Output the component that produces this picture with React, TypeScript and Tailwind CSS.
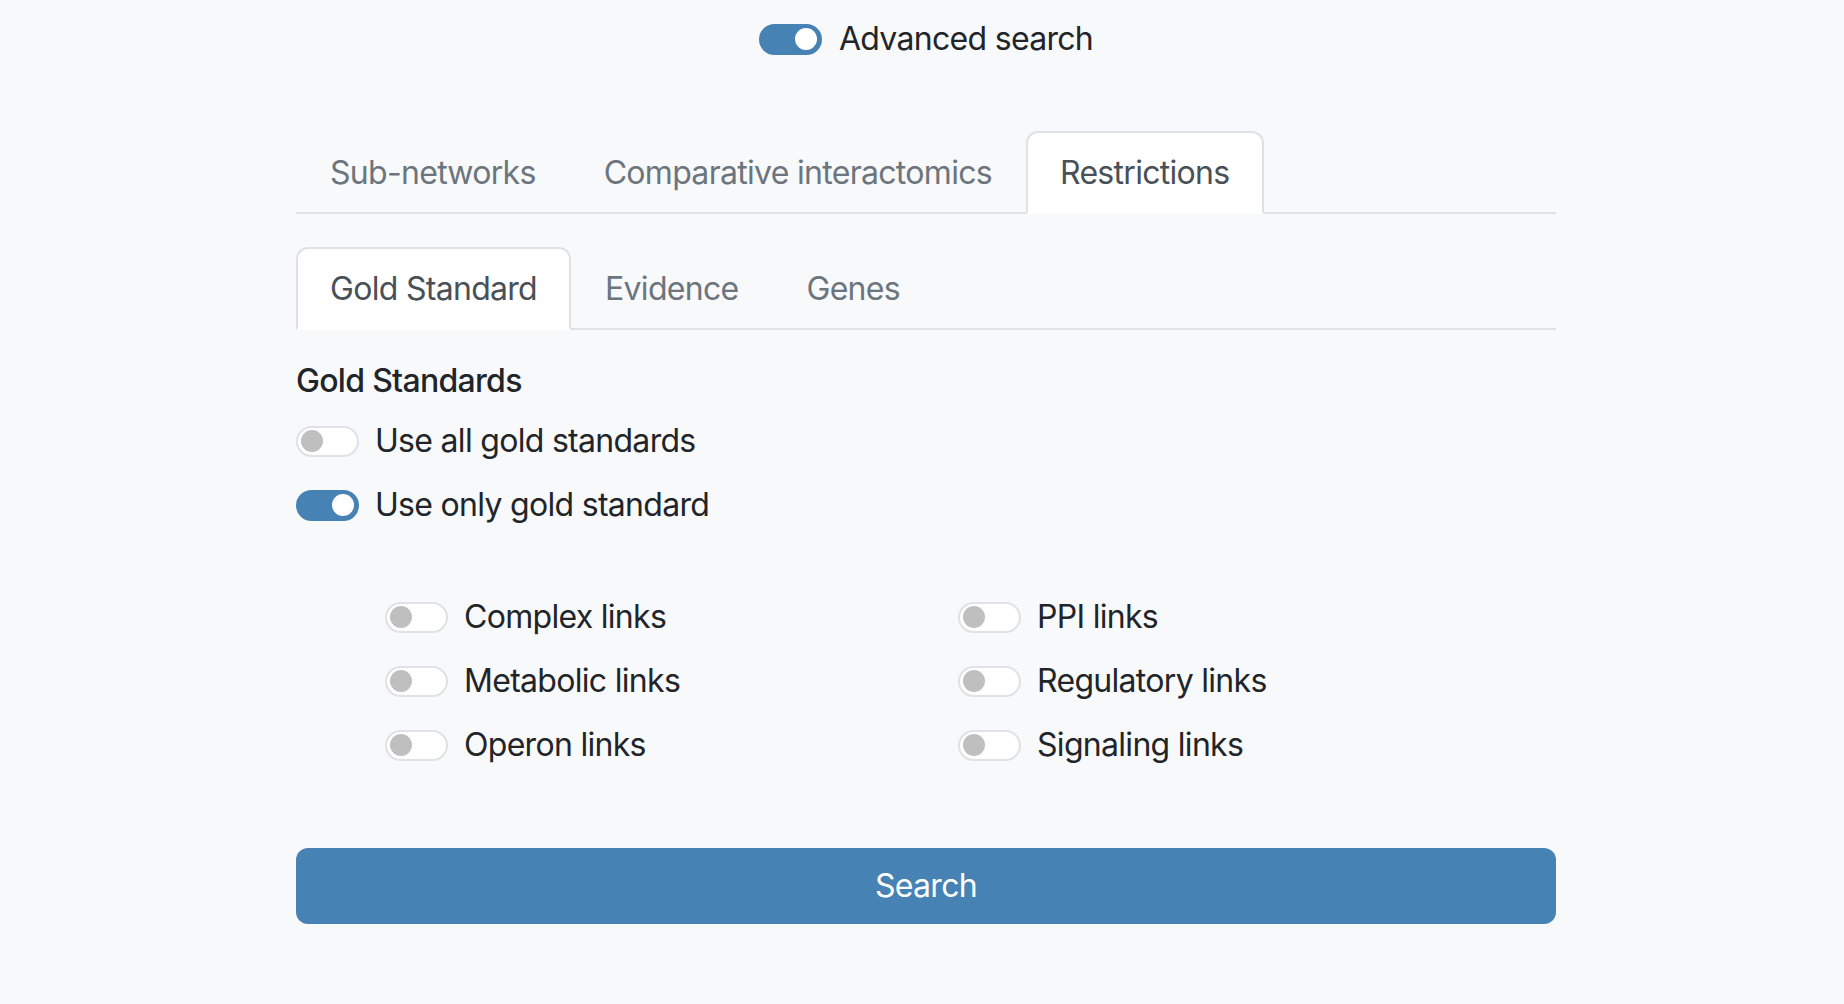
import { useState } from 'react'

function Toggle({ on, onClick }: { on: boolean; onClick?: () => void }) {
  return (
    <button
      type="button"
      onClick={onClick}
      className={`flex h-[31px] w-[63px] shrink-0 items-center rounded-full border-2 px-[3px] ${
        on ? 'justify-end border-[#4682b4] bg-[#4682b4]' : 'justify-start border-[#dee2e6] bg-white'
      }`}
    >
      <span className={`block h-[22px] w-[22px] rounded-full ${on ? 'bg-white' : 'bg-[#bfbfbf]'}`} />
    </button>
  )
}

function SwitchRow({ label, on, onClick }: { label: string; on: boolean; onClick: () => void }) {
  return (
    <div className="flex h-[64px] items-center gap-[16px]">
      <Toggle on={on} onClick={onClick} />
      <span className="leading-[48px]">{label}</span>
    </div>
  )
}

function Tabs({ tabs, active, onChange }: { tabs: string[]; active: string; onChange: (t: string) => void }) {
  return (
    <div className="flex border-b-2 border-[#dee2e6]">
      {tabs.map(t => (
        <button
          key={t}
          type="button"
          onClick={() => onChange(t)}
          className={`-mb-[2px] rounded-t-[12px] border-2 px-[32px] pt-[16px] pb-[15px] leading-[48px] ${
            t === active
              ? 'border-[#dee2e6] border-b-white bg-white text-[#495057]'
              : 'border-transparent text-[#6c757d]'
          }`}
        >
          {t}
        </button>
      ))}
    </div>
  )
}

export default function App() {
  const [advanced, setAdvanced] = useState(true)
  const [mainTab, setMainTab] = useState('Restrictions')
  const [subTab, setSubTab] = useState('Gold Standard')
  const [useAll, setUseAll] = useState(false)
  const [useOnly, setUseOnly] = useState(true)
  const [links, setLinks] = useState<Record<string, boolean>>({})

  const toggleLink = (name: string) => setLinks(prev => ({ ...prev, [name]: !prev[name] }))

  const linkRows = [
    ['Complex links', 'PPI links'],
    ['Metabolic links', 'Regulatory links'],
    ['Operon links', 'Signaling links']
  ]

  return (
    <div className="min-h-screen bg-[#f8f9fa] pt-[15px] text-[32px] tracking-[-0.7px] text-[#212529] font-['Inter','Noto_Sans',sans-serif]">
      <div className="ml-[296px] w-[1260px]">
        <div className="flex h-[48px] items-center justify-center gap-[17px]">
          <Toggle on={advanced} onClick={() => setAdvanced(!advanced)} />
          <span className="leading-[48px]">Advanced search</span>
        </div>

        <div className="mt-[68px]">
          <Tabs
            tabs={['Sub-networks', 'Comparative interactomics', 'Restrictions']}
            active={mainTab}
            onChange={setMainTab}
          />
        </div>

        <div className="mt-[33px]">
          <Tabs tabs={['Gold Standard', 'Evidence', 'Genes']} active={subTab} onChange={setSubTab} />
        </div>

        <h5 className="mt-[27px] font-medium leading-[48px]">Gold Standards</h5>
        <div className="mt-[4px]">
          <SwitchRow label="Use all gold standards" on={useAll} onClick={() => setUseAll(!useAll)} />
          <SwitchRow label="Use only gold standard" on={useOnly} onClick={() => setUseOnly(!useOnly)} />
        </div>

        <div className="mt-[48px] grid grid-cols-[573px_573px] pl-[89px]">
          {linkRows.flat().map(name => (
            <SwitchRow key={name} label={name} on={!!links[name]} onClick={() => toggleLink(name)} />
          ))}
        </div>

        <button
          type="button"
          className="mt-[71px] h-[76px] w-full rounded-[12px] bg-[#4682b4] text-white leading-[48px]"
        >
          Search
        </button>
      </div>
    </div>
  )
}
